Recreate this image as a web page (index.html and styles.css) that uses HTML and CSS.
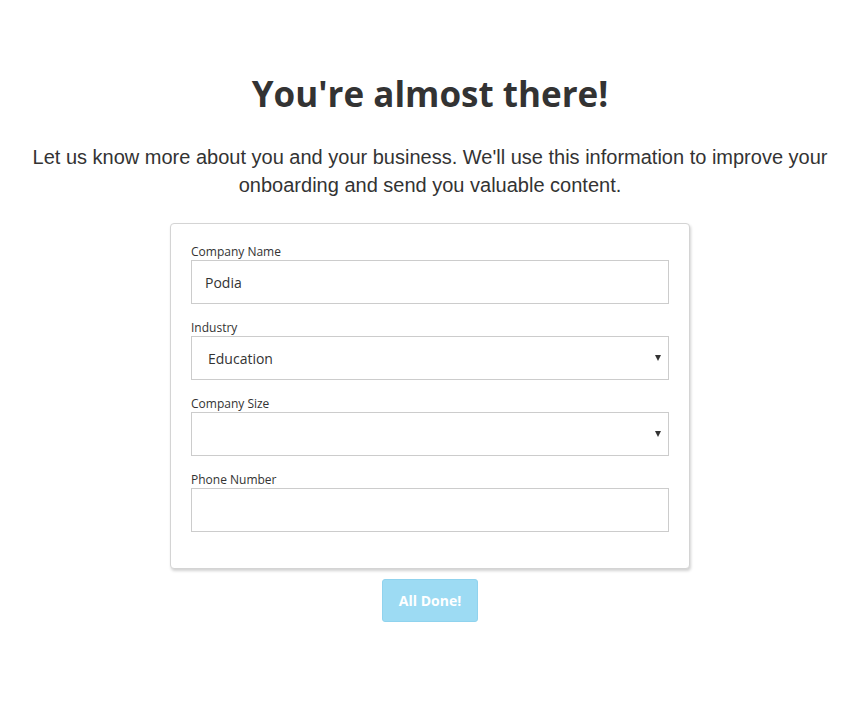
FILE: index.html
```html
<!DOCTYPE html>
<html lang="en">
<head>
<meta charset="utf-8">
<title>You're almost there!</title>
<link rel="stylesheet" href="styles.css">
</head>
<body>
<main class="page">
  <h1 class="title">You're almost there!</h1>
  <p class="lead">Let us know more about you and your business. We'll use this information to improve your onboarding and send you valuable content.</p>
  <form class="card">
    <div class="field">
      <label class="label">Company Name</label>
      <div class="input">Podia</div>
    </div>
    <div class="field">
      <label class="label">Industry</label>
      <div class="input select"><span class="select-value">Education</span><span class="caret"></span></div>
    </div>
    <div class="field">
      <label class="label">Company Size</label>
      <div class="input select"><span class="select-value"></span><span class="caret"></span></div>
    </div>
    <div class="field">
      <label class="label">Phone Number</label>
      <div class="input"></div>
    </div>
  </form>
  <div class="actions">
    <button class="btn" type="button">All Done!</button>
  </div>
</main>
</body>
</html>
```

FILE: styles.css
```css
html, body {
  margin: 0;
  padding: 0;
  background: #fff;
}
body {
  padding-left: 8px;
  font-family: "Open Sans", sans-serif;
  color: #333;
}
.page {
  display: flex;
  flex-direction: column;
  align-items: center;
  padding-top: 74px;
}
.title {
  margin: 0;
  font-family: "Open Sans", sans-serif;
  font-weight: 700;
  font-size: 35px;
  line-height: 40px;
  color: #333;
}
.lead {
  margin: 29px 0 0;
  font-family: "Liberation Sans", Arial, sans-serif;
  font-size: 20px;
  line-height: 28px;
  color: #333;
  text-align: center;
  max-width: 810px;
}
.card {
  margin-top: 24px;
  width: 478px;
  padding: 20px 20px 20px;
  border: 1px solid #d4d4d4;
  border-radius: 4px;
  box-shadow: 1px 2px 3px rgba(0,0,0,0.18);
  background: #fff;
}
.field {
  display: flex;
  flex-direction: column;
  margin-bottom: 16px;
}
.label {
  font-size: 12px;
  line-height: 16px;
  color: #333;
}
.input {
  box-sizing: border-box;
  height: 44px;
  border: 1px solid #ccc;
  padding: 2px 13px 0;
  font-size: 14px;
  line-height: 40px;
  color: #333;
}
.select {
  display: flex;
  align-items: center;
  justify-content: space-between;
  padding: 2px 7px 0 16px;
}
.caret {
  width: 0;
  height: 0;
  margin-top: -2px;
  border-left: 3px solid transparent;
  border-right: 3px solid transparent;
  border-top: 6px solid #333;
}
.actions {
  margin-top: 10px;
  display: flex;
  justify-content: center;
}
.btn {
  width: 96px;
  height: 43px;
  border: 1px solid #90d3ee;
  border-radius: 3px;
  background: #9ddbf3;
  color: #fff;
  font-family: "Open Sans", sans-serif;
  font-weight: 700;
  font-size: 14px;
  padding: 0;
}
```
